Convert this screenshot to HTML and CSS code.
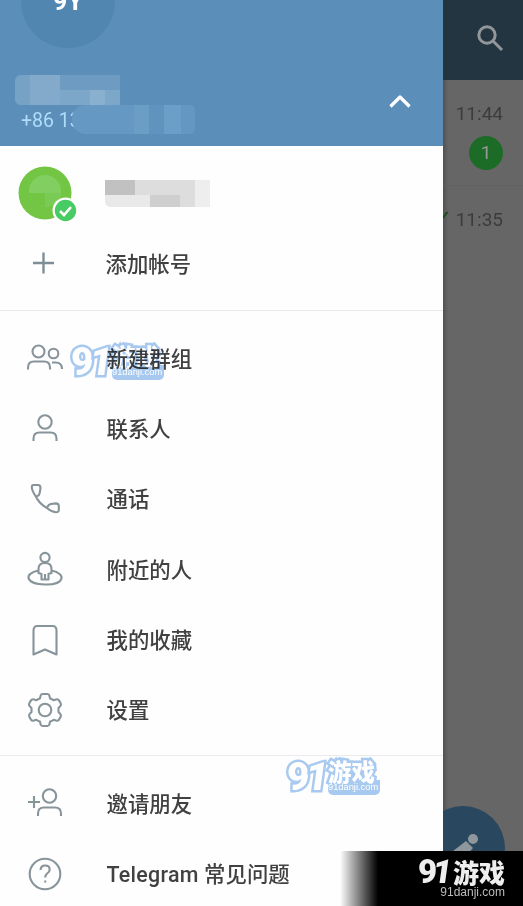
FILE: index.html
```html
<!DOCTYPE html>
<html lang="zh-CN">
<head>
<meta charset="utf-8">
<title>Telegram</title>
<link rel="stylesheet" href="styles.css">
</head>
<body>
<div class="screen">
  <aside class="drawer">
    <header class="profile">
      <div class="avatar">9Y</div>
      <div class="mosaic name-mask"><i></i><i></i><i></i><i></i><i></i><i></i><i></i><i></i><i></i><i></i><i></i><i></i><i></i><i></i></div>
      <div class="phone">+86 13<span class="phone-mask"></span></div>
      <svg class="chevron" width="24" height="16" viewBox="0 0 24 16"><path d="M2.500 13.500 12 4 21.500 13.500"/></svg>
    </header>
    <section class="accounts">
      <div class="row account">
        <svg class="account-pic" width="60" height="60" viewBox="0 0 60 60">
          <circle cx="27" cy="27" r="26.500" fill="#72c644"/>
          <circle cx="27" cy="25" r="16" fill="#83ce60"/><path d="M11 27h16v14A16 16 0 0 1 11 27Z" fill="#72c644"/><path d="M27 27h15a16 16 0 0 1-15 14Z" fill="#7acb55"/>
          <circle cx="47.500" cy="44.500" r="13" fill="#fff"/><circle cx="47.500" cy="44.500" r="10.700" fill="#47cb62"/>
          <path d="m42 45 4 4 7-8" fill="none" stroke="#fff" stroke-width="2.600"/>
        </svg>
        <div class="account-mask"><i></i><i></i><i></i><i></i><i></i><i></i><i></i><i></i><i></i><i></i></div>
      </div>
      <div class="row"><svg class="icon plus" viewBox="0 0 40 40"><path d="M18.500 9.500v21M8 20h21"/></svg><span class="add">添加帐号</span></div>
    </section>
    <nav class="group">
      <div class="row"><svg class="icon" viewBox="0 0 40 40"><circle cx="13.500" cy="13.500" r="6"/><circle cx="28.500" cy="15.500" r="4.800"/><path d="M3 31.500v-2q0-6 6-6h10q6 0 6 6v2M27 24.500h3.500q6.500 0 6.500 6.500"/></svg><span>新建群组</span></div>
      <div class="row"><svg class="icon" viewBox="0 0 40 40"><circle cx="20" cy="13" r="6.700"/><path d="M8.500 32v-2.500q0-6 6-6h11q6 0 6 6V32"/></svg><span>联系人</span></div>
      <div class="row"><svg class="icon" viewBox="0 0 40 40"><path d="M8.500 6h4.500q2.500 0 2.500 3l-.8 5q-.4 2.500-2.400 3l-1.500.5c-2-3-4-6-4-9.500q0-2 1.700-2ZM10.800 17.500Q14.500 25 22 29M22 29l.8-1.800q.8-1.600 3-2.200l5-.6q3 0 3 3v3.500q0 2.500-3 2.300-4.800-.5-8.800-4.200"/></svg><span>通话</span></div>
      <div class="row"><svg class="icon" viewBox="0 0 40 40"><circle cx="20" cy="8.500" r="4.600"/><path d="M16.500 30.500V25l-3-1v-4q0-6 6.500-6t6.500 6v4l-3 1v5.500ZM20 25v5.500M13.500 21.500c-15 3-13.500 13.500 6.500 14s21.500-11 6.500-14"/></svg><span>附近的人</span></div>
      <div class="row"><svg class="icon" viewBox="0 0 40 40"><path d="M8.500 34.500v-24q0-4.500 4-4.500h15q4 0 4 4.500v24L20 29.500Z"/></svg><span>我的收藏</span></div>
      <div class="row"><svg class="icon" viewBox="0 0 40 40"><circle cx="20" cy="20" r="6.300"/><path d="M17.500 4h5q1.500 0 2 2l.6 2.500q2 .6 3.500 1.700l2.400-.8q2-.6 3 1l1.600 2.700q1 1.800-.4 3.100l-1.700 1.700v4.200l1.700 1.700q1.400 1.300.4 3.100L34 29.600q-1 1.600-3 1l-2.400-.8q-1.500 1.100-3.500 1.700l-.6 2.500q-.5 2-2 2h-5q-1.500 0-2-2l-.6-2.500q-2-.6-3.500-1.700l-2.400.8q-2 .6-3-1l-1.600-2.700q-1-1.800.4-3.100l1.700-1.700v-4.200l-1.700-1.700q-1.400-1.300-.4-3.100L6 10.400q1-1.600 3-1l2.400.8q1.500-1.100 3.500-1.700l.6-2.500q.5-2 2-2Z"/></svg><span>设置</span></div>
    </nav>
    <nav class="group">
      <div class="row"><svg class="icon" viewBox="0 0 40 40"><circle cx="24.500" cy="13" r="6.700"/><path d="M13 33v-2.500q0-6 6-6h11q6 0 6 6V33M3 19h12M9 13v12"/></svg><span>邀请朋友</span></div>
      <div class="row"><svg class="icon" viewBox="0 0 40 40"><circle cx="20" cy="20" r="15.300"/><path d="M15.500 16q.3-4.500 4.700-4.500t4.500 4q0 2.300-2.500 4-2 1.500-2 4M20.200 26.500v2"/></svg><span><span class="latin">Telegram</span> 常见问题</span></div>
    </nav>
  </aside>
  <main class="chats">
    <div class="toolbar"><svg width="30" height="30" viewBox="0 0 30 30"><circle cx="11" cy="11" r="8.200"/><path d="m17 17 9 9"/></svg></div>
    <div class="chat"><time>11:44</time><b class="badge">1</b></div>
    <div class="chat"><svg class="tick" width="6" height="9" viewBox="0 0 6 9"><path d="M0 7 4.500 1"/></svg><time>11:35</time></div>
    <svg class="fab" width="84" height="84" viewBox="0 0 84 84"><circle cx="42" cy="42" r="42"/><path class="tip" d="m23 52 22-17 7 7-15 16H23Z"/><circle class="tip" cx="52" cy="33" r="5"/></svg>
  </main>
  <div class="watermark first"><em>9<i>1</i></em><span><b>游戏</b><small>91danji.com</small></span></div>
  <div class="watermark second"><em>9<i>1</i></em><span><b>游戏</b><small>91danji.com</small></span></div>
  <footer class="brand"><div><em>9<i>1</i></em><b>游戏</b></div><small>91danji.com</small></footer>
</div>
</body>
</html>
```

FILE: styles.css
```css
* { box-sizing: border-box; }
body { margin: 0; font-family: Roboto, "Noto Sans CJK SC", sans-serif; }
.screen { position: relative; display: flex; width: 523px; height: 906px; overflow: hidden; background: #666; }
.drawer { width: 443px; background: #fefefe; }
.profile { position: relative; height: 146px; overflow: hidden; background: #5b8fba; }
.avatar { width: 94px; height: 94px; margin: -46px 0 0 21px; border-radius: 50%; background: #5186b1; color: #fff; font-size: 25px; font-weight: 700; line-height: 96px; text-align: center; }
.mosaic { display: grid; grid-template-columns: repeat(7, 15px); grid-template-rows: 15px 15px; width: 105px; margin: 27px 0 0 15px; overflow: hidden; border-radius: 6px 0 0 6px; background: #6d9bc2; }
.mosaic i:nth-child(1), .mosaic i:nth-child(8) { background: #76a2c6; }
.mosaic i:nth-child(2), .mosaic i:nth-child(3), .mosaic i:nth-child(9), .mosaic i:nth-child(10) { background: #83aacb; }
.mosaic i:nth-child(11), .mosaic i:nth-child(12), .mosaic i:nth-child(14) { background: #7da7c9; }
.mosaic i:nth-child(13) { background: #8ab0cf; }
.phone { display: flex; height: 32px; padding-left: 21px; color: #b0dcfa; font-size: 19.500px; line-height: 32px; white-space: pre; }
.phone-mask { position: relative; width: 123px; height: 29px; margin-left: -9px; border-radius: 13px 5px 5px 14px; background: linear-gradient(90deg, #6598c2 0 50%, #6b9dc5 50% 63%, #6094bf 63% 75%, #6c9fc8 75% 89%, #6497c1 89%); }
.chevron { position: absolute; left: 388px; top: 93px; fill: none; stroke: #fff; stroke-width: 3.200; stroke-linejoin: round; }
.accounts { height: 165px; border-bottom: 1px solid #e9e9e9; }
.row { display: flex; align-items: center; height: 70.350px; padding-left: 25px; color: #414141; font-size: 21.400px; font-weight: 500; line-height: 30px; }
.row > span { margin: 3px 0 0 41.500px; }
.row > .add { margin: 4px 0 0 40.500px; }
.latin { letter-spacing: .3px; }
.icon { flex: none; width: 40px; height: 40px; fill: none; stroke: #87949a; stroke-width: 2.100; stroke-linejoin: round; }
.icon.plus { stroke-width: 2.400; stroke: #7e8e98; }
.account { height: 82px; padding: 20px 0 0 18px; align-items: flex-start; }
.account-mask { display: grid; grid-template-columns: 30px 15px 30px 15px 15px; grid-template-rows: 15px 12px; width: 105px; margin: 14px 0 0 27px; }
.account-mask i { background: #ddd; }
.account-mask i:nth-child(1) { background: #c1c1c1; }
.account-mask i:nth-child(5), .account-mask i:nth-child(10) { background: #eee; }
.account-mask i:nth-child(6), .account-mask i:nth-child(7) { background: #e9e9e9; }
.account-mask i:nth-child(6) { border-radius: 0 0 0 5px; }
.account-mask i:nth-child(8) { background: #cfcfcf; }
.group { padding: 12px 0 10px; height: 445px; border-bottom: 1px solid #ebebeb; }
.group + .group { border: 0; }
.chats { position: relative; width: 80px; box-shadow: inset 3px 0 3px #555; }
.toolbar { height: 80px; padding: 24px 0 0 33px; background: #223541; }
.toolbar svg { fill: none; stroke: #929698; stroke-width: 3; }
.chat { position: relative; height: 106px; padding: 22px 20px 0 0; border-bottom: 1px solid #616161; color: #3c3c3c; font-size: 19px; line-height: 23px; text-align: right; }
.chat + .chat { border: 0; }
.badge { display: block; width: 34px; height: 34px; margin: 11px 0 0 auto; border-radius: 50%; background: #1c6c27; color: #999; font-size: 19px; font-weight: 400; line-height: 34px; text-align: center; }
.tick { position: absolute; left: 0; top: 25px; fill: none; stroke: #194b1d; stroke-width: 2; }
.fab { position: absolute; left: -22px; top: 806px; clip-path: inset(0 0 0 22px); fill: #29475e; }
.fab .tip { fill: #8f979c; }
.watermark { position: absolute; display: flex; width: 98px; height: 40px; color: #fff; -webkit-text-stroke: 5px #a9caf0; paint-order: stroke fill; stroke-linejoin: round; }
.first { left: 69px; top: 342px; mix-blend-mode: multiply; }
.second { left: 285px; top: 757px; }
.watermark em { width: 43px; font: normal 900 39px/40px Roboto, sans-serif; padding-left: 2px; }
em { white-space: nowrap; }
em i { display: inline-block; margin-left: -4px; font-style: normal; transform: skewX(-8deg); }
.watermark span { width: 52px; height: 36px; margin-top: 2px; border-radius: 5px; background: linear-gradient(transparent 21px, #a9caf0 21px); }
.watermark b { display: block; font: 900 23.500px/24px "Noto Sans CJK SC", sans-serif; }
.watermark small { display: block; margin-top: -1px; font: 9.300px/11px "Liberation Sans", sans-serif; -webkit-text-stroke-width: 0; }
.brand { position: absolute; right: 0; bottom: 0; width: 183px; height: 55px; padding: 7px 18px 0 0; background: linear-gradient(90deg, transparent 0, #000 38px); color: #eee; text-align: right; }
.brand div { display: flex; justify-content: flex-end; height: 27px; }
.brand em { width: 35px; font: normal 900 33px/28px Roboto, sans-serif; text-align: left; }
.brand b { font: 900 26px/27px "Noto Sans CJK SC", sans-serif; }
.brand small { display: block; color: #bbb; font: 12px/15px "Liberation Sans", sans-serif; }
```
